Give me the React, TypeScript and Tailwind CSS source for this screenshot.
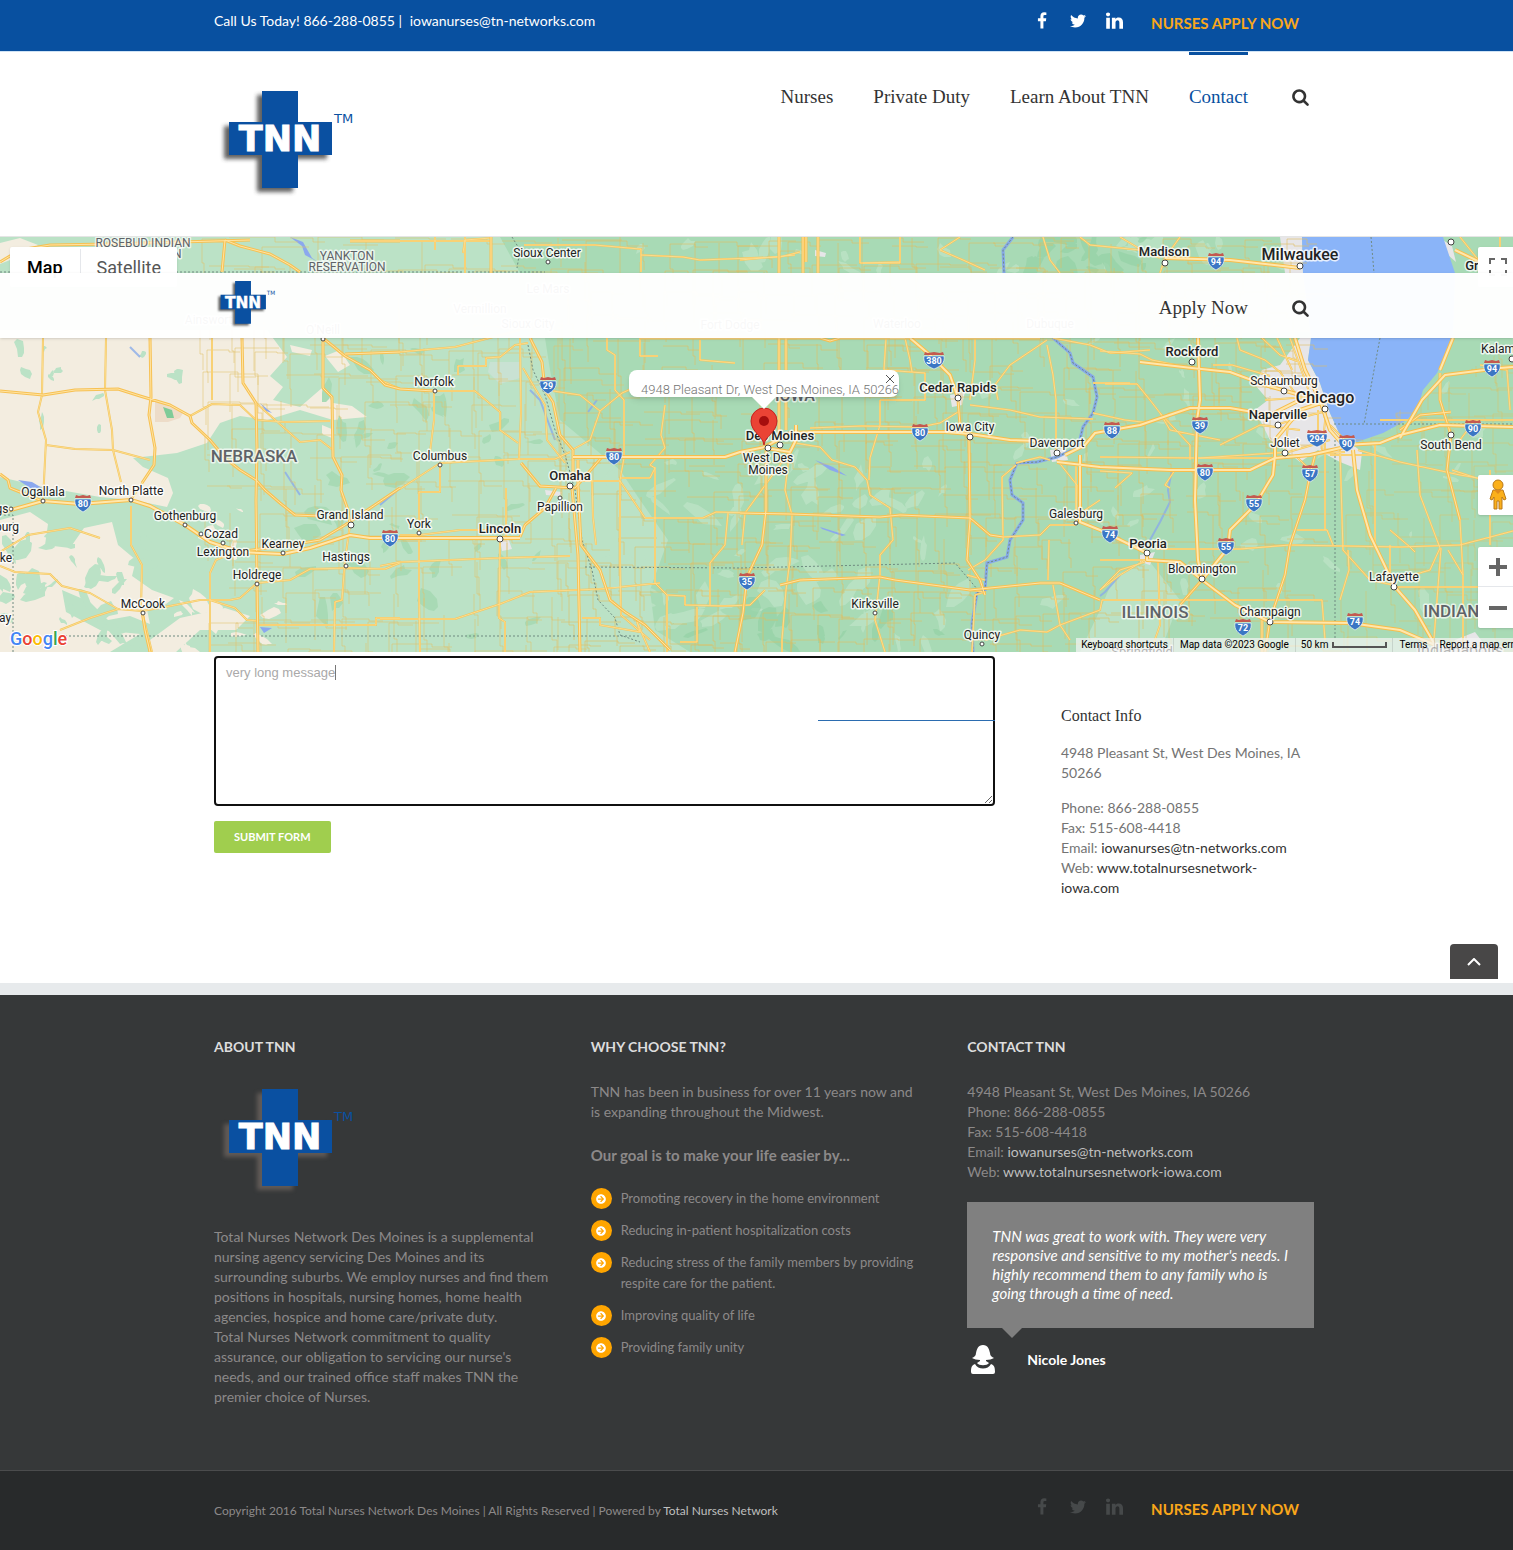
import React from "react";
import { FaTwitter, FaArrowCircleRight } from "react-icons/fa";

/* ---------- map data ---------- */

function makeRandom(seed: number) {
  let s = seed;
  return () => {
    s = (s * 1664525 + 1013904223) % 4294967296;
    return s / 4294967296;
  };
}

function blobs(seed: number, n: number, x0: number, y0: number, x1: number, y1: number, size: number) {
  const rnd = makeRandom(seed);
  let d = "";
  for (let i = 0; i < n; i++) {
    const cx = x0 + rnd() * (x1 - x0);
    const cy = y0 + rnd() * (y1 - y0);
    const tilt = rnd() * Math.PI;
    const a = size * (0.4 + rnd());
    const b = a * (0.25 + rnd() * 0.4);
    for (let k = 0; k < 9; k++) {
      const t = (k / 9) * Math.PI * 2;
      const m = 0.55 + rnd() * 0.6;
      const px = Math.cos(t) * a * m;
      const py = Math.sin(t) * b * m;
      const x = cx + px * Math.cos(tilt) - py * Math.sin(tilt);
      const y = cy + px * Math.sin(tilt) + py * Math.cos(tilt);
      d += `${k ? "L" : "M"}${x.toFixed(0)} ${y.toFixed(0)}`;
    }
    d += "Z";
  }
  return d;
}

function countyRoads(seed: number, x0: number, x1: number, step: number) {
  const rnd = makeRandom(seed);
  let d = "";
  for (let x = x0; x < x1; x += step) {
    for (let y = 237; y < 652; y += step) {
      const jx = Math.round(x + rnd() * 10);
      const jy = Math.round(y + rnd() * 10);
      const l = Math.round(step * (0.7 + rnd()));
      if (rnd() > 0.3) d += `M${jx} ${jy}h${l}v${Math.round(rnd() * 6)}h${Math.round(l / 2)}`;
      if (rnd() > 0.3) d += `M${jx} ${jy}v${l}h${Math.round(rnd() * 5)}v${Math.round(l / 2)}`;
    }
  }
  return d;
}

const BEIGE =
  "M0 330H267L287 357 270 376 283 387 273 400 300 407 322 388 333 403 352 406 367 417 333 420 300 410 267 420 240 416 220 423 207 443 177 453 133 458 143 467 168 478 173 493 167 507 133 500 100 497 43 487 0 477Z" +
  "M0 243L20 238 38 245 30 252 0 264ZM325 356L340 350 350 365 338 372ZM290 345L312 350 310 356 292 352ZM322 425L334 430 332 438 322 434Z" +
  "M0 520L30 512 48 524 45 545 70 548 84 528 112 522 118 545 136 560 132 576 152 590 174 598 162 607 145 600 150 624 130 616 108 620 90 602 62 590 66 612 100 630 140 634 110 652 0 652Z" +
  "M150 640L180 618 225 608 250 616 236 630 200 630 176 652H150Z";

const ROADS_MINOR =
  "M43 338L42 395 38 412 46 440 43 501M106 338L105 390 112 430 113 450 121 482M46 445L75 449 113 450 150 460M190 416L212 404 240 405 256 420 285 422 330 421M212 338V400M256 403L300 442 320 440 333 450" +
  "M142 483L131 500M131 506V545L142 565 141 610M0 552L28 535 70 528 100 538M0 566L15 572 50 574 62 586 90 593 118 609 142 611M142 611L165 607 200 600 230 600 240 598 257 583 290 580 310 569 350 568 385 569 400 563" +
  "M60 630L90 618 118 609M142 611L152 652M210 652V573L216 560 235 552M210 600L235 608 247 620 258 621M258 625H376V618H400M350 525L345 560 342 600 335 602 334 652" +
  "M434 391V420L430 452M434 391H475L500 412V430L518 443M434 391L400 389 380 380M400 352L455 347 520 330M458 375V366H486V358L500 357 515 345 528 343M520 338L521 413 519 460" +
  "M400 489L440 463 520 459 555 459 570 452M440 465V492H419V595L420 652M380 538H398M400 535H420L460 530 520 530M500 540L499 618 505 622V652M380 566L400 562 500 558 570 556M380 619H455L500 604 530 592 600 589 660 583M506 488V540M522 463L540 487H570" +
  "M523 368L545 405 547 440 565 463M553 391L580 395 600 411 590 440 572 450M600 411L622 393 640 385M607 338V350L615 355V390L624 400V458L620 480V560L621 615 650 640M640 338V356H658M665 405L661 435 665 448 650 465 655 468M655 468L650 478H620M582 481H620L645 518H703L716 512 785 514M592 480L593 517 596 545M700 340V360L735 363M728 513L725 545 710 563V605M655 467V583L667 595 685 596V605L725 606 750 605 765 590" +
  "M582 618H600V625L640 632 637 622 650 652M667 595V652M697 607V642H680M381 241H491M463 253L465 240 491 238M524 245H595L640 249H641V272M641 255L683 257 700 260 780 257 800 252M740 260L795 255M860 237V263H900V237M863 263L900 262M940 250L963 260 985 270M940 250L960 237M1043 237L1050 260 1060 273M1080 237L1090 245 1140 250M435 237V250M465 237V273" +
  "M790 448L785 490 792 515 790 560 786 590 782 640 782 652M795 443L820 447 832 460 855 467 867 480 870 495 890 508 893 540 880 555V575L875 620 885 652M790 451L745 513 742 545M810 428L862 426 920 427 940 423 958 412M880 400V425L870 458 869 480M886 338L884 370 925 373V400L880 400M905 338L910 360 912 372M975 338V360L970 400M970 405L1010 410 1040 417 1093 419M1047 340L1010 365 995 385 998 400M1047 345L1053 375 1056 400V455M1093 383H1130M1053 338L1090 345 1110 353 1150 350" +
  "M1093 413L1125 420 1150 423M1016 465L1002 477 1003 540 985 560 968 570M1016 463L1040 457 1050 460M1057 460L1077 485 1076 522M1100 500L1085 510 1076 520M1076 465V522M1003 537L1040 535 1050 525 1076 525M1049 540L1048 580M967 575L985 580M970 590L985 592 975 595 972 652M1053 585L1060 625 1100 610 1102 600 1240 600M1060 625L1047 632 1020 630 985 640M1060 625L1070 640M1100 590L1120 570 1145 562" +
  "M1100 351L1140 354 1152 360 1190 368M1105 384H1137L1150 400 1160 413 1190 445V460M1160 413L1170 430 1220 440M1100 457L1200 458 1290 452M1175 470L1165 485 1170 488M1100 471L1132 473 1115 488M1156 549H1240L1290 545 1400 547 1460 545 1513 531M1197 458H1290M1237 338L1240 350 1265 360 1280 372M1280 372L1300 400M1295 455L1310 470M1213 365H1232L1270 376M1220 445L1260 425 1300 430M1375 445V545M1340 450L1343 550 1370 580 1393 585M1325 440V530M1390 545V575L1395 587H1513M1390 530L1410 547 1415 552" +
  "M1417 450L1420 495 1440 548M1480 365L1507 370 1510 410M1452 470L1513 490M1460 440L1475 420M1380 420H1513M1460 520L1463 575V652M1440 548L1430 570 1413 575M1441 548L1433 652M1448 550L1463 575M1340 600L1349 570 1348 550M1358 450L1400 462 1460 475 1490 480M1100 560L1147 560M1145 560L1120 575 1100 590M1158 562L1160 625 1153 645M1297 530H1327L1333 545M1240 600H1322L1325 640M1490 470V545M1330 455H1375M1500 237V270M1460 237L1480 262M1120 237L1145 252 1160 258M1165 258L1180 237M1165 258L1160 273" +
  "M1265 400L1320 396M1290 338L1302 372 1312 400M1275 425L1322 412M1288 425L1285 453M1318 410V445M1326 412L1322 450M1285 453L1330 440M1277 338L1292 370M1250 382L1290 392M1262 338L1280 355 1300 362M1300 455L1345 452M1330 425L1345 440";

const ROADS_MAJOR =
  "M150 338L151 397 149 415 155 448 154 465 142 483M0 391L43 395 75 390 118 389 140 396 170 405 190 416 192 423 210 440 225 458 240 470 256 480 265 490 280 503 295 515 320 516M242 338L243 383 256 403 257 450 256 500 257 580 258 652M323 338V388L332 397 333 457 342 475 341 490 348 510 350 525M323 338L345 356 370 370 385 385 400 389M345 354L400 352M245 551L290 545 320 540 345 525 400 488M225 240L240 246 270 254 290 265 300 272M225 240L222 272M0 262L20 250 50 245 110 244 250 240M350 241H400M491 237V273M0 474L8 480 10 488 40 500" +
  "M142 611L145 630 150 652M400 389L434 391M806 237L806 262M803 237V273M818 237V273M779 237V273M779 338V440M786 338V430M640 338H820L830 341 840 338 1040 338M890 338L905 338M766 450V510L762 545 747 577 743 613 735 652M958 400L960 425 969 440 970 520 967 560 980 580 985 595M740 513L790 514 880 517 900 515 970 518 990 535 1003 537M780 585L800 580 880 577 895 580 970 590 1040 583 1060 583 1100 600" +
  "M578 460V485L581 545 600 570 610 600 625 612 645 625 670 650M572 488L578 555 580 652M520 537L525 525 545 508 556 488M530 338L542 362 545 390 553 402 560 435 573 450V480M521 463L540 486 575 488 602 457M1315 455L1310 475 1305 500 1290 545 1285 575 1270 620 1265 652M1451 435L1447 470 1460 520M1440 373V400L1451 435M1400 430L1420 415 1451 412M1262 620V652M1180 605L1202 580";

const INTERSTATES =
  "M0 513L43 501 80 504 131 500 150 506 185 525 210 542 240 552 283 554 310 548 350 535 370 538 520 538M573 457H725L740 452 765 447 790 433 815 432H945L970 434 1010 440 1040 441M910 338L930 355 950 375 958 398M1057 462L1100 467 1170 470 1250 470 1275 458 1310 455 1345 447M1065 455L1085 445 1095 433 1112 430 1140 425 1190 408 1230 408 1270 415 1300 400M1198 338L1200 400 1197 420 1195 500 1198 560 1202 580M1275 455L1273 475 1255 505 1230 530 1228 548 1210 570 1202 580" +
  "M1353 450L1357 490 1370 535 1395 587 1415 610 1435 645M1080 455V522L1100 530 1147 553V560L1180 562 1202 580 1235 605 1270 622 1350 623 1400 630 1435 645M1345 445L1380 443 1400 435 1440 425 1513 427M1400 438L1422 400 1445 375 1500 368 1513 367M1440 370L1453 338M1165 258L1230 260 1300 268M1140 362L1192 368 1230 372 1265 385 1300 395M1295 338L1305 370 1320 400 1330 430 1345 447M1330 400L1300 410 1275 440 1275 458M1455 250L1480 262M766 448L790 452 796 440V425";

const MISSISSIPPI =
  "M1013 237L1003 250 1004 273M1053 338L1070 353 1073 363 1093 377 1097 397 1093 413 1083 427 1078 447 1057 457 1037 462 1017 463 1010 480 1012 495 1023 503 1023 520 1010 540 1007 557 987 563 985 590 977 593 972 623 973 652";

type Label = [string, number, number, number, number?];
const CITIES: Label[] = [
  ["Sioux Center", 547, 257, 12],
  ["Norfolk", 434, 386, 12],
  ["Columbus", 440, 460, 12],
  ["Omaha", 570, 480, 13, 500],
  ["Papillion", 560, 511, 12],
  ["Lincoln", 500, 533, 13, 500],
  ["York", 419, 528, 12],
  ["Grand Island", 350, 519, 12],
  ["Kearney", 283, 548, 12],
  ["Hastings", 346, 561, 12],
  ["Holdrege", 257, 579, 12],
  ["Lexington", 223, 556, 12],
  ["Cozad", 221, 538, 12],
  ["Gothenburg", 185, 520, 12],
  ["North Platte", 131, 495, 12],
  ["Ogallala", 43, 496, 12],
  ["McCook", 143, 608, 12],
  ["gs", 2, 513, 12],
  ["burg", 7, 531, 12],
  ["ke", 6, 562, 12],
  ["ay", 5, 622, 12],
  ["Des Moines", 780, 440, 13, 500],
  ["West Des", 768, 462, 12],
  ["Moines", 768, 474, 12],
  ["Cedar Rapids", 958, 392, 13, 500],
  ["Iowa City", 970, 431, 12],
  ["Davenport", 1057, 447, 12],
  ["Galesburg", 1076, 518, 12],
  ["Peoria", 1148, 548, 13, 500],
  ["Bloomington", 1202, 573, 12],
  ["Champaign", 1270, 616, 12],
  ["Kirksville", 875, 608, 12],
  ["Quincy", 982, 639, 12],
  ["Lafayette", 1394, 581, 12],
  ["Rockford", 1192, 356, 13, 500],
  ["Schaumburg", 1284, 385, 12],
  ["Chicago", 1325, 403, 16, 500],
  ["Naperville", 1278, 419, 13, 500],
  ["Joliet", 1285, 447, 12],
  ["South Bend", 1451, 449, 12],
  ["Kalam", 1498, 353, 12],
  ["Madison", 1164, 256, 13, 500],
  ["Milwaukee", 1300, 260, 16, 500],
  ["Gr", 1472, 270, 13, 500],
  ["Springfield", 1142, 656, 13],
  ["Indianapolis", 1460, 656, 16],
  ["Ainsworth", 212, 324, 12],
  ["O'Neill", 323, 334, 12],
  ["Vermillion", 480, 313, 12],
  ["Le Mars", 548, 293, 12],
  ["Sioux City", 528, 328, 12],
  ["Fort Dodge", 730, 329, 12],
  ["Waterloo", 897, 328, 12],
  ["Dubuque", 1050, 328, 12],
];

const STATES: Label[] = [
  ["NEBRASKA", 254, 462, 17, 500],
  ["IOWA", 795, 401, 16, 500],
  ["ILLINOIS", 1155, 618, 17, 500],
  ["INDIANA", 1457, 617, 17, 500],
  ["ROSEBUD INDIAN", 143, 247, 12],
  ["RESERVATION", 143, 258, 12],
  ["YANKTON", 347, 260, 12],
  ["RESERVATION", 347, 271, 12],
];

const DOTS: [number, number, number][] = [
  [548, 262, 2], [435, 391, 2], [440, 465, 2], [570, 486, 3], [560, 498, 2], [500, 539, 3], [419, 533, 2],
  [351, 525, 3], [283, 553, 2], [346, 566, 2], [257, 584, 2], [223, 543, 2], [201, 534, 2], [185, 525, 2],
  [131, 500, 2], [43, 501, 2], [11, 509, 2], [143, 613, 2], [323, 339, 2], [768, 448, 3], [780, 445, 3],
  [958, 398, 3], [970, 437, 3], [1057, 453, 3], [1076, 523, 2], [1147, 553, 3], [1202, 579, 3], [1270, 622, 3],
  [875, 613, 2], [982, 644, 2], [1394, 587, 3], [1192, 362, 3], [1284, 391, 3], [1325, 409, 3], [1278, 425, 3],
  [1285, 453, 3], [1451, 435, 3], [1512, 359, 3], [1165, 263, 3], [1300, 266, 3], [1451, 242, 3],
];

const SHIELDS: [string, number, number][] = [
  ["80", 83, 503], ["80", 390, 538], ["29", 548, 385], ["80", 614, 456], ["35", 747, 581], ["380", 934, 360],
  ["80", 920, 432], ["88", 1112, 430], ["74", 1110, 534], ["94", 1216, 261], ["39", 1200, 425], ["80", 1205, 472],
  ["55", 1254, 503], ["55", 1226, 546], ["57", 1310, 473], ["294", 1317, 438], ["90", 1347, 443], ["90", 1473, 428],
  ["94", 1492, 368], ["72", 1243, 627], ["74", 1355, 621],
];

function Shield({ n, x, y }: { n: string; x: number; y: number }) {
  const w = n.length > 2 ? 10 : 8;
  return (
    <g transform={`translate(${x} ${y})`}>
      <path
        d={`M${-w} -4H${w}C${w + 1} 3 ${w - 3} 6 0 9C${3 - w} 6 ${-w - 1} 3 ${-w} -4Z`}
        fill="#3b76c4"
        stroke="#fff"
        strokeOpacity="0.6"
      />
      <path d={`M${1 - w} -8L${4 - w} -7 0 -8 ${w - 4} -7 ${w - 1} -8 ${w} -5H${-w}Z`} fill="#c4594f" />
      <text y="4" textAnchor="middle" fontSize="9" fontWeight="700" fill="#fff">
        {n}
      </text>
    </g>
  );
}

function MapCanvas() {
  return (
    <svg
      className="absolute inset-0 h-full w-full"
      viewBox="0 237 1513 415"
      preserveAspectRatio="xMidYMid slice"
      fontFamily="Roboto, sans-serif"
      role="img"
      aria-label="Map of Iowa and neighbouring states"
    >
      <rect y="237" width="1513" height="415" fill="#bbe2c6" />
      <path
        d="M545 338L575 338 620 338 1513 330V652H690L655 630 650 590 668 540 640 500 620 470 560 420 550 370ZM500 237H1513V273H520Z"
        fill="#a8dab5"
      />
      <path d={BEIGE} fill="#f3ede0" />
      <path d={blobs(3, 34, 0, 525, 150, 650, 13)} fill="#bbe2c6" />
      <path d={blobs(8, 10, 170, 600, 290, 652, 12) + blobs(15, 8, 190, 500, 240, 560, 8)} fill="#f3ede0" />
      <path d={blobs(44, 12, 10, 345, 200, 440, 8)} fill="#bbe2c6" />
      <path d={blobs(5, 40, 300, 340, 540, 650, 13)} fill="#a8dab5" />
      <path
        d={blobs(6, 60, 600, 460, 960, 650, 15) + blobs(12, 22, 640, 240, 1300, 272, 12) + blobs(19, 40, 960, 340, 1513, 640, 10)}
        fill="#bbe2c6"
        opacity="0.8"
      />
      <path d={blobs(31, 20, 1020, 237, 1150, 270, 12) + blobs(32, 14, 680, 600, 960, 650, 14)} fill="#94d2a5" opacity="0.7" />
      <path d="M1115 575L1150 562 1180 600 1160 652H1080L1100 610Z" fill="#bbe2c6" />
      <path d="M155 400L183 413 180 418 168 422H155Z" fill="#eddcc8" />
      <path d="M163 407L172 410 174 418 167 418Z" fill="#7fcb98" />
      <path
        d="M1280 237H1302L1303 273H1285ZM1262 370L1280 365 1300 338H1311L1308 360 1320 383 1330 413 1340 435 1362 452 1360 470 1340 462 1318 450 1300 462 1285 450 1270 440 1255 410 1268 400 1255 385ZM545 490L562 492 560 496 546 495ZM500 540L508 538 512 549 502 551ZM950 395L965 392 962 405 952 407ZM1050 450L1065 448 1068 460 1052 462ZM815 250L826 253 825 257 815 256ZM1140 555L1155 552 1150 565 1140 562ZM1455 640L1475 632 1490 652H1450ZM1443 240L1452 246 1456 262 1448 255Z"
        fill="#e7e6e8"
      />
      <path d="M490 362H520V378L500 384 488 372Z" fill="#c9e2d3" />
      <path
        d="M1302 237L1303 273 1311 338 1308 360 1320 383 1330 413 1340 435 1357 442 1383 433 1407 420 1418 407 1423 390 1437 373 1447 353 1453 338 1455 273 1443 237Z"
        fill="#8ab4f8"
      />
      <path
        d="M18 480L32 482 42 488 30 488ZM290 237L303 242 312 258 318 262 305 255 302 246ZM260 403L272 413 266 411ZM260 627L272 628 264 633ZM815 460L833 467 847 476 830 470ZM820 527L846 535 842 536 822 529Z"
        fill="#8ba8ee"
      />
      <path d="M1172 470L1168 490 1170 502 1160 522 1150 540M1120 575L1105 592 1100 596M380 505L400 488M285 472L300 495M130 347L140 357M530 390L540 400 555 440M597 400L588 412" fill="none" stroke="#8aabe8" strokeWidth="2" opacity="0.8" />
      <g fill="none">
        <path d={countyRoads(21, 200, 560, 27)} stroke="#e4c36c" opacity="0.55" />
        <path d={countyRoads(22, 560, 1290, 25)} stroke="#e0bf60" opacity="0.6" />
        <path d={countyRoads(23, 1340, 1513, 25)} stroke="#e0bf60" opacity="0.45" clipPath="url(#southOfLake)" />
        <path d={MISSISSIPPI} stroke="#86a9ea" strokeWidth="3" />
        <path
          d="M0 272H545M65 636H640M0 515H13V652M585 567L740 568 955 563 978 590M1335 440V640M1334 424H1513M1371 237L1374 273M1380 338L1364 424M512 237L520 250 517 268M528 345L533 370 545 395 555 430 565 455 575 490 582 540 592 570 598 600 615 618 620 635 640 642"
          stroke="#6f8a80"
          strokeDasharray="2 2"
        />
        <path d={MISSISSIPPI} stroke="#6f8a80" strokeDasharray="2 2" />
        <path d={ROADS_MINOR} stroke="#f3c65f" strokeWidth="2" strokeLinejoin="round" />
        <path d={ROADS_MINOR} stroke="#fddc8c" strokeWidth="1" />
        <path d={ROADS_MAJOR} stroke="#f7c153" strokeWidth="3" strokeLinejoin="round" />
        <path d={ROADS_MAJOR} stroke="#ffe4a3" strokeWidth="1" />
        <path d={INTERSTATES} stroke="#f7bd4b" strokeWidth="4" strokeLinejoin="round" />
        <path d={INTERSTATES} stroke="#ffe7ac" strokeWidth="2" strokeLinejoin="round" />
      </g>
      <clipPath id="southOfLake">
        <path d="M1340 445L1513 345V652H1340Z" />
      </clipPath>
      {SHIELDS.map(([n, x, y], i) => (
        <Shield key={i} n={n} x={x} y={y} />
      ))}
      {DOTS.map(([x, y, r], i) => (
        <circle key={i} cx={x} cy={y} r={r} fill="#fff" stroke="#444" />
      ))}
      <g textAnchor="middle" stroke="#fff" strokeWidth="3" strokeLinejoin="round" paintOrder="stroke">
        {STATES.map(([t, x, y, s, w], i) => (
          <text key={i} x={x} y={y} fontSize={s} fontWeight={w ?? 400} fill="#5f6368" strokeOpacity="0.7">
            {t}
          </text>
        ))}
        {CITIES.map(([t, x, y, s, w], i) => (
          <text key={i} x={x} y={y} fontSize={s} fontWeight={w ?? 400} fill="#222" strokeOpacity="0.8">
            {t}
          </text>
        ))}
      </g>
      <path
        d="M764 445C763 436 751 432 751 421A13 13 0 0 1 777 421C777 432 765 436 764 445Z"
        fill="#ea4335"
        stroke="#c5221f"
      />
      <circle cx="764" cy="421" r="5" fill="#a50e0e" />
      <text x="10" y="645" fontSize="18" fontWeight="500" stroke="#fff" strokeWidth="2" paintOrder="stroke">
        <tspan fill="#4285f4">G</tspan>
        <tspan fill="#ea4335">o</tspan>
        <tspan fill="#fbbc04">o</tspan>
        <tspan fill="#4285f4">g</tspan>
        <tspan fill="#34a853">l</tspan>
        <tspan fill="#ea4335">e</tspan>
      </text>
    </svg>
  );
}

/* ---------- shared pieces ---------- */

function Logo({ className, dark = false }: { className: string; dark?: boolean }) {
  const id = dark ? "logoShadowDark" : "logoShadow";
  return (
    <svg className={className} viewBox="0 0 150 120" role="img" aria-label="TNN">
      <filter id={id} x="-20%" y="-20%" width="140%" height="140%">
        <feGaussianBlur stdDeviation="2" />
      </filter>
      <path
        d="M43 12H79V43H113V76H79V109H43V76H10V43H43Z"
        fill={dark ? "#8a7d75" : "#3a3a3a"}
        opacity={dark ? 0.5 : 0.8}
        filter={`url(#${id})`}
      />
      <path d="M48 8H84V39H118V72H84V105H48V72H15V39H48Z" fill="#0a50a1" />
      <text x="66" y="68" textAnchor="middle" fontSize="35" fontWeight="700" fontFamily="DejaVu Sans, sans-serif" fill="#fff" stroke="#fff">
        TNN
      </text>
      <text x="120" y="40" fontSize="13" fontFamily="DejaVu Sans, sans-serif" fill="#0a50a1">
        TM
      </text>
    </svg>
  );
}

function SearchIcon() {
  return (
    <svg width="17" height="18" viewBox="0 0 1664 1792" fill="currentColor" aria-hidden="true">
      <path d="M1152 832q0-185-131.500-316.500t-316.500-131.500-316.500 131.500-131.500 316.500 131.500 316.500 316.500 131.500 316.500-131.500 131.500-316.500zm512 832q0 52-38 90t-90 38q-54 0-90-38l-343-342q-179 124-399 124-143 0-273.500-55.500t-225-150-150-225-55.500-273.500 55.500-273.500 150-225 225-150 273.500-55.500 273.500 55.500 225 150 150 225 55.500 273.500q0 220-124 399l343 343q37 37 37 90z" />
    </svg>
  );
}

function Container({ className = "", children }: { className?: string; children: React.ReactNode }) {
  return (
    <div className="pl-[15px]">
      <div className={`mx-auto max-w-[1100px] ${className}`}>{children}</div>
    </div>
  );
}

function Social({ className }: { className: string }) {
  return (
    <div className={`flex items-center gap-5 ${className}`}>
      <a href="#facebook" aria-label="Facebook" className="flex w-4 justify-center">
        <svg width="10" height="17" viewBox="0 0 1024 1680" fill="currentColor">
          <path d="M959 12v264h-157q-86 0-116 36t-30 108v189h293l-39 296h-254v759h-306v-759h-255v-296h255v-218q0-186 104-288.500t277-102.500q147 0 228 12z" />
        </svg>
      </a>
      <a href="#twitter" aria-label="Twitter" className="flex w-4 justify-center"><FaTwitter size={16} /></a>
      <a href="#linkedin" aria-label="LinkedIn" className="flex w-4 justify-center">
        <svg className="shrink-0" width="17" height="17" viewBox="0 130 1536 1500" fill="currentColor">
          <path d="M349 625v991h-330v-991h330zm21-306q1 73-50.500 122t-135.500 49h-2q-82 0-132-49t-50-122q0-74 51.500-122.500t134.500-48.500 133 48.500 51 122.500zm1166 729v568h-329v-530q0-105-40.500-164.500t-126.500-59.500q-63 0-105.500 34.500t-63.500 85.500q-11 30-11 81v553h-329q2-399 2-647t-1-296l-1-48h329v144h-2q20-32 41-56t56.500-52 87-43.500 114.500-15.500q171 0 275 113.500t104 332.500z" />
        </svg>
      </a>
    </div>
  );
}

function ApplyLink() {
  return (
    <a href="#apply" className="text-[15px] leading-5 font-bold text-[#f9a61a]">
      NURSES APPLY NOW
    </a>
  );
}

const REASONS = [
  "Promoting recovery in the home environment",
  "Reducing in-patient hospitalization costs",
  "Reducing stress of the family members by providing respite care for the patient.",
  "Improving quality of life",
  "Providing family unity",
];

const SERIF = "font-['Liberation_Serif',serif]";

/* ---------- page ---------- */

export default function App() {
  return (
    <div className="overflow-hidden bg-white font-[Lato,sans-serif] text-sm leading-5 text-[#747474]">
      <header>
        <div className="border-b border-[#cfe3f5] bg-[#0850a0] text-white">
          <Container className="flex h-[51px] items-start justify-between pr-[15px]">
            <p className="pt-[11px]">
              Call Us Today! 866-288-0855 <span className="mr-1">|</span>{" "}
              <a href="mailto:iowanurses@tn-networks.com">iowanurses@tn-networks.com</a>
            </p>
            <div className="flex items-start gap-[29px]">
              <Social className="pt-3" />
              <div className="pt-[13px]"><ApplyLink /></div>
            </div>
          </Container>
        </div>
        <div className="border-b border-[#e5e5e5]">
          <Container className="flex h-[184px] items-start justify-between pr-[5px]">
            <a href="#home" className="pt-[31px]"><Logo className="h-[120px] w-[150px]" /></a>
            <nav className={`flex items-start gap-10 text-[19px] text-[#333] ${SERIF}`}>
              <a href="#nurses" className="border-t-3 border-transparent pt-[30px] leading-6">Nurses</a>
              <a href="#private" className="border-t-3 border-transparent pt-[30px] leading-6">Private Duty</a>
              <a href="#learn" className="border-t-3 border-transparent pt-[30px] leading-6">Learn About TNN</a>
              <a href="#contact" className="border-t-3 border-[#0850a0] pt-[30px] leading-6 text-[#0850a0]">Contact</a>
              <button aria-label="Search" className="ml-1 pt-9"><SearchIcon /></button>
            </nav>
          </Container>
        </div>
      </header>

      <section className="relative h-[415px] overflow-hidden font-[Roboto,sans-serif]">
        <MapCanvas />
        <div className="absolute top-[10px] left-[10px] flex h-10 rounded-xs bg-white pt-[2px] text-lg shadow-sm">
          <button className="border-r border-gray-200 px-[17px] font-medium text-black">Map</button>
          <button className="px-4 text-[#565656]">Satellite</button>
        </div>
        <button aria-label="Toggle fullscreen view" className="absolute top-[10px] -right-[5px] flex h-10 w-10 items-center justify-center rounded-xs bg-white shadow-sm">
          <svg width="18" height="18" viewBox="0 0 18 18" fill="none" stroke="#666" strokeWidth="2">
            <path d="M1 6V1H6M12 1H17V6M17 12V17H12M6 17H1V12" />
          </svg>
        </button>
        <button aria-label="Street View" className="absolute top-[238px] -right-[5px] flex h-10 w-10 items-center justify-center rounded-xs bg-white shadow-sm">
          <svg width="18" height="32" viewBox="0 0 18 32" fill="#fbb01b" stroke="#b9791b">
            <path d="M4 11H14L17 20 15 21 13 18V30H10V22H8V30H5V18L3 21 1 20Z" />
            <circle cx="9" cy="6" r="5" />
            <path d="M5 11L9 15 13 11Z" fill="#e08a1e" stroke="none" />
          </svg>
        </button>
        <div className="absolute top-[310px] -right-[5px] w-10 divide-y divide-gray-200 rounded-xs bg-white shadow-sm">
          <button aria-label="Zoom in" className="flex h-10 w-10 items-center justify-center">
            <svg width="18" height="18" viewBox="0 0 18 18" fill="#666"><path d="M7 0H11V7H18V11H11V18H7V11H0V7H7Z" /></svg>
          </button>
          <button aria-label="Zoom out" className="flex h-[41px] w-10 items-center justify-center">
            <svg width="18" height="4" viewBox="0 0 18 4" fill="#666"><path d="M0 0H18V4H0Z" /></svg>
          </button>
        </div>
        <div className="pointer-events-none absolute inset-x-0 top-[133px] flex justify-center pl-[15px]">
          <div className="relative h-[27px] w-[270px] rounded-lg bg-white shadow-md">
            <p className="pt-[10px] pl-3 text-[13px] leading-5 font-light whitespace-nowrap text-[#747474]">4948 Pleasant Dr, West Des Moines, IA 50266</p>
            <svg className="absolute top-1 right-1" width="10" height="10" viewBox="0 0 10 10" stroke="#555" fill="none"><path d="M1 1L9 9M9 1L1 9" /></svg>
            <svg className="absolute top-[27px] left-[123px]" width="24" height="12" viewBox="0 0 24 12"><path d="M0 0H24L12 12Z" fill="#fff" /></svg>
          </div>
        </div>
        <div className="absolute -right-[15px] bottom-0 flex h-[14px] bg-[#f5f5f5]/70 text-[10px] leading-[14px] text-black">
          <button className="border-r border-black/10 px-[5px]">Keyboard shortcuts</button>
          <span className="border-r border-black/10 px-[6px]">Map data ©2023 Google</span>
          <span className="flex items-center gap-1 border-r border-black/10 px-[5px]">
            50 km
            <svg width="55" height="6" viewBox="0 0 55 6" fill="none" stroke="#555" strokeWidth="2"><path d="M1 0V5H54V0" /></svg>
          </span>
          <a href="#terms" className="border-r border-black/10 px-[6px]">Terms</a>
          <a href="#report" className="px-[5px]">Report a map error</a>
        </div>
        <div className="absolute inset-x-0 top-9 h-[65px] bg-white/97 shadow-sm">
          <Container className="flex h-[65px] items-start justify-between pr-[5px]">
            <a href="#home" className="pt-1"><Logo className="h-[54px] w-[66px]" /></a>
            <nav className={`flex items-center gap-11 pt-[23px] text-[19px] leading-6 text-[#333] ${SERIF}`}>
              <a href="#apply-now">Apply Now</a>
              <button aria-label="Search"><SearchIcon /></button>
            </nav>
          </Container>
        </div>
      </section>

      <main>
        <Container className="flex h-[331px] items-start justify-between pt-1">
          <form className="relative w-[71%]">
            <textarea
              aria-label="Message"
              defaultValue="very long message"
              className="block h-[150px] w-full rounded border-2 border-[#101010] bg-white px-[10px] py-[5px] font-['Liberation_Sans',sans-serif] text-[13px] leading-5 text-[#aaa9a9] outline-none"
            />
            <span className="absolute top-[9px] left-[121px] h-[15px] w-px bg-[#777]" />
            <span className="absolute top-16 right-0 h-px w-[177px] bg-[#2b6cb0]" />
            <button type="button" className="mt-[15px] h-8 rounded-xs bg-[#a0ce4e] px-5 text-[11px] font-bold text-white">SUBMIT FORM</button>
          </form>
          <aside className="w-[23%] pt-[50px]">
            <h3 className={`text-base leading-5 text-[#333] ${SERIF}`}>Contact Info</h3>
            <p className="mt-[17px]">4948 Pleasant St, West Des Moines, IA<br />50266</p>
            <p className="mt-[15px]">
              Phone: 866-288-0855<br />
              Fax: 515-608-4418<br />
              Email: <a href="mailto:iowanurses@tn-networks.com" className="text-[#333]">iowanurses@tn-networks.com</a><br />
              Web: <a href="#web" className="text-[#333]">www.totalnursesnetwork-<br />iowa.com</a>
            </p>
          </aside>
        </Container>
      </main>

      <footer className="relative border-t-12 border-[#e7eaec] bg-[#363839] text-[#8c8989]">
        <button aria-label="Back to top" className="absolute -top-[51px] right-[15px] flex h-[35px] w-12 items-center justify-center rounded-t bg-[#484747]">
          <svg width="14" height="8" viewBox="0 0 14 8" fill="none" stroke="#fff" strokeWidth="2"><path d="M1 7L7 1L13 7" /></svg>
        </button>
        <Container className="grid h-[475px] grid-cols-3 gap-[30px] pt-[42px]">
          <section>
            <h3 className="font-bold text-[#ddd]">ABOUT TNN</h3>
            <Logo dark className="mt-6 h-[120px] w-[150px]" />
            <p className="mt-[26px]">
              Total Nurses Network Des Moines is a supplemental<br />nursing agency servicing Des Moines and its<br />
              surrounding suburbs. We employ nurses and find them<br />positions in hospitals, nursing homes, home health<br />
              agencies, hospice and home care/private duty.<br />Total Nurses Network commitment to quality<br />
              assurance, our obligation to servicing our nurse's<br />needs, and our trained office staff makes TNN the<br />
              premier choice of Nurses.
            </p>
          </section>
          <section>
            <h3 className="font-bold text-[#ddd]">WHY CHOOSE TNN?</h3>
            <p className="mt-[25px]">TNN has been in business for over 11 years now and<br />is expanding throughout the Midwest.</p>
            <p className="mt-[23px] text-[15px] font-bold">Our goal is to make your life easier by...</p>
            <ul className="mt-[23px] flex flex-col gap-[11px] text-[13px] leading-[21px]">
              {REASONS.map((r) => (
                <li key={r} className="flex gap-[9px]">
                  <span className="flex h-[21px] w-[21px] shrink-0 items-center justify-center rounded-full bg-[#ffa500] text-white">
                    <FaArrowCircleRight size={10} />
                  </span>
                  <span className="max-w-[300px]">{r}</span>
                </li>
              ))}
            </ul>
          </section>
          <section>
            <h3 className="font-bold text-[#ddd]">CONTACT TNN</h3>
            <p className="mt-[25px]">
              4948 Pleasant St, West Des Moines, IA 50266<br />
              Phone: 866-288-0855<br />
              Fax: 515-608-4418<br />
              Email: <a href="mailto:iowanurses@tn-networks.com" className="text-[#bfbfbf]">iowanurses@tn-networks.com</a><br />
              Web: <a href="#web" className="text-[#bfbfbf]">www.totalnursesnetwork-iowa.com</a>
            </p>
            <blockquote className="relative mt-5 bg-[#808080] p-[25px] text-[15px] leading-[19px] text-white italic">
              TNN was great to work with. They were very<br />responsive and sensitive to my mother's needs. I<br />highly recommend them to any family who is<br />going through a time of need.
              <svg className="absolute top-full left-[35px]" width="20" height="10" viewBox="0 0 20 10"><path d="M0 0H20L10 10Z" fill="#808080" /></svg>
            </blockquote>
            <div className="flex items-center gap-8 pt-[17px] pl-1 font-bold text-white">
              <svg width="24" height="30" viewBox="0 0 24 30" fill="#fff">
                <path d="M12 0C7 0 6 4 5 8C5 11 3 12 1 13C3 14 6 15 9 15V16L6 18C8 21 16 21 18 18L15 16V15C18 15 21 14 23 13C21 12 19 11 19 8C18 4 17 0 12 0Z" />
                <path d="M4 19C1 20 0 22 0 27Q0 29 2 29H22Q24 29 24 27C24 22 23 20 20 19C17 25 7 25 4 19Z" />
              </svg>
              Nicole Jones
            </div>
          </section>
        </Container>
        <div className="border-t border-[#4b4c4d] bg-[#282a2b]">
          <Container className="flex h-[79px] items-start justify-between pr-[15px]">
            <p className="pt-[30px] text-xs leading-5">
              Copyright 2016 Total Nurses Network Des Moines | All Rights Reserved | Powered by{" "}
              <a href="#tnn" className="text-[#bfbfbf]">Total Nurses Network</a>
            </p>
            <div className="flex items-start gap-[29px]">
              <Social className="pt-[27px] text-[#46494a]" />
              <div className="pt-[28px]"><ApplyLink /></div>
            </div>
          </Container>
        </div>
      </footer>
    </div>
  );
}
